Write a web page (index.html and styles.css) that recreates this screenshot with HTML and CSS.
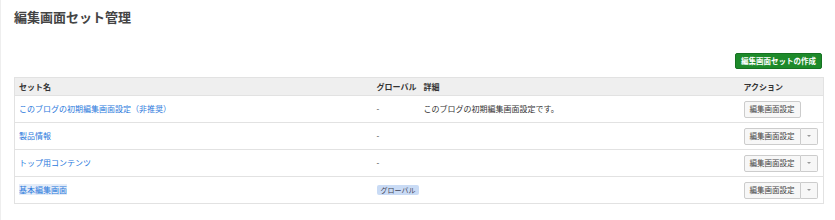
FILE: index.html
```html
<!DOCTYPE html>
<html lang="ja">
<head>
    <meta charset="UTF-8">
    <title>編集画面セット管理</title>
    <link rel="stylesheet" href="styles.css">
</head>
<body>
    <div class="page">
        <h1 class="page-title">編集画面セット管理</h1>

        <div class="toolbar">
            <button class="btn btn-create">編集画面セットの作成</button>
        </div>

        <table class="set-table">
            <colgroup>
                <col class="col-name">
                <col class="col-global">
                <col class="col-detail">
                <col class="col-action">
            </colgroup>
            <thead>
                <tr>
                    <th>セット名</th>
                    <th>グローバル</th>
                    <th>詳細</th>
                    <th>アクション</th>
                </tr>
            </thead>
            <tbody>
                <tr>
                    <td><a href="#">このブログの初期編集画面設定（非推奨）</a></td>
                    <td>-</td>
                    <td>このブログの初期編集画面設定です。</td>
                    <td><button class="btn btn-edit">編集画面設定</button></td>
                </tr>
                <tr>
                    <td><a href="#">製品情報</a></td>
                    <td>-</td>
                    <td></td>
                    <td>
                        <div class="btn-group">
                            <button class="btn btn-edit">編集画面設定</button><button class="btn btn-caret"><span class="caret"></span></button>
                        </div>
                    </td>
                </tr>
                <tr>
                    <td><a href="#">トップ用コンテンツ</a></td>
                    <td>-</td>
                    <td></td>
                    <td>
                        <div class="btn-group">
                            <button class="btn btn-edit">編集画面設定</button><button class="btn btn-caret"><span class="caret"></span></button>
                        </div>
                    </td>
                </tr>
                <tr>
                    <td><a href="#" class="selected">基本編集画面</a></td>
                    <td><span class="badge">グローバル</span></td>
                    <td></td>
                    <td>
                        <div class="btn-group">
                            <button class="btn btn-edit">編集画面設定</button><button class="btn btn-caret"><span class="caret"></span></button>
                        </div>
                    </td>
                </tr>
            </tbody>
        </table>
    </div>
</body>
</html>
```

FILE: styles.css
```css
body {
    margin: 0;
    font-family: "Noto Sans CJK JP", "Noto Sans", sans-serif;
    font-size: 8px;
    color: #333;
    background-color: #fff;
}
.page {
    border-left: 1px solid #eee;
    min-height: 220px;
    padding: 0 13px 0 13px;
    box-sizing: border-box;
}
.page-title {
    margin: 0;
    padding-top: 8px;
    font-size: 13px;
    line-height: 17px;
    font-weight: bold;
    color: #444;
}
.toolbar {
    display: flex;
    justify-content: flex-end;
    margin-top: 28px;
}
.btn {
    font-family: inherit;
    border-radius: 2px;
    cursor: pointer;
    margin: 0;
    white-space: nowrap;
}
.btn-create {
    background-color: #1d8a2a;
    border: 1px solid #167222;
    color: #fff;
    font-size: 7.5px;
    font-weight: bold;
    line-height: 14px;
    height: 16px;
    padding: 0 5px;
}
.set-table {
    width: 809px;
    margin-top: 8px;
    border-collapse: collapse;
    table-layout: fixed;
    border: 1px solid #e2e2e2;
}
.col-name { width: 358px; }
.col-global { width: 47px; }
.col-detail { width: 320px; }
.col-action { width: 84px; }
.set-table th {
    background-color: #efefef;
    text-align: left;
    font-weight: bold;
    color: #333;
    height: 17px;
    padding: 0 4px;
    line-height: 10px;
    white-space: nowrap;
    border-bottom: 1px solid #e2e2e2;
}
.set-table td {
    height: 26px;
    padding: 0 4px;
    line-height: 10px;
    white-space: nowrap;
    border-bottom: 1px solid #e2e2e2;
    vertical-align: middle;
}
.set-table a {
    color: #2a78dc;
    text-decoration: none;
}
.set-table a.selected {
    background-color: #e3ecf9;
}
.badge {
    display: inline-block;
    background-color: #c9dbf5;
    color: #445;
    font-size: 7px;
    line-height: 10px;
    padding: 0 4px;
    border-radius: 2px;
}
.btn-group {
    display: flex;
}
.btn-edit {
    background-color: #f7f7f7;
    border: 1px solid #ccc;
    color: #444;
    font-size: 7.5px;
    line-height: 14px;
    height: 17px;
    padding: 0 5px;
}
.btn-group .btn-edit {
    border-radius: 2px 0 0 2px;
}
.btn-caret {
    background-color: #f7f7f7;
    border: 1px solid #ccc;
    border-left: none;
    border-radius: 0 2px 2px 0;
    width: 17px;
    height: 17px;
    padding: 0;
    display: flex;
    align-items: center;
    justify-content: center;
}
.caret {
    width: 0;
    height: 0;
    border-left: 2px solid transparent;
    border-right: 2px solid transparent;
    border-top: 2px solid #999;
}
```
